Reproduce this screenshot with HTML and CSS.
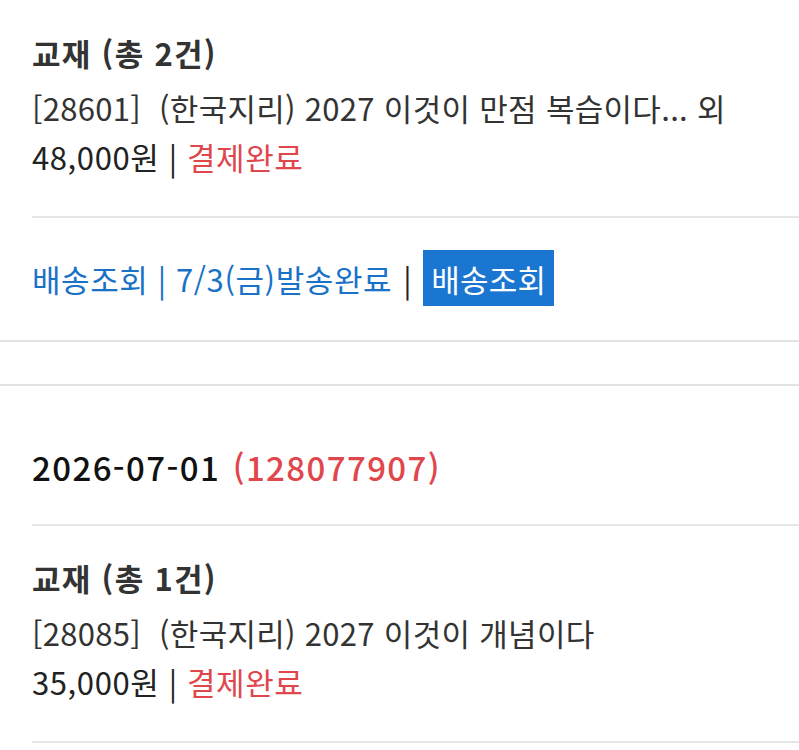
FILE: index.html
```html
<!DOCTYPE html>
<html lang="ko">
<head>
    <meta charset="UTF-8">
    <meta name="viewport" content="width=device-width, initial-scale=1.0">
    <title>주문내역</title>
    <link rel="stylesheet" href="styles.css">
</head>
<body>
    <div class="order">
        <div class="item">
            <h3 class="item-title">교재 (총 2건)</h3>
            <p class="item-name">[28601]&nbsp; (한국지리) 2027 이것이 만점 복습이다... 외</p>
            <p class="item-price">48,000원 | <span class="status">결제완료</span></p>
        </div>
        <div class="delivery">
            <span class="link">배송조회 | 7/3(금)발송완료</span>
            <span class="bar">|</span>
            <button type="button" class="btn">배송조회</button>
        </div>
    </div>

    <div class="order order-next">
        <div class="order-date">2026-07-01 <span class="order-no">(128077907)</span></div>
        <div class="item">
            <h3 class="item-title">교재 (총 1건)</h3>
            <p class="item-name">[28085]&nbsp; (한국지리) 2027 이것이 개념이다</p>
            <p class="item-price">35,000원 | <span class="status">결제완료</span></p>
        </div>
    </div>
</body>
</html>
```

FILE: styles.css
```css
body {
    margin: 0;
    background: #fff;
    font-family: "Noto Sans CJK KR", "Noto Sans", sans-serif;
    color: #222;
}
.order {
    border-bottom: 2px solid #e4e4e4;
}
.order-next {
    margin-top: 42px;
    border-top: 2px solid #e4e4e4;
    border-bottom: none;
}
.item {
    margin-left: 32px;
    padding: 28px 0 35px;
    border-bottom: 2px solid #e6e6e6;
}
.item-title {
    margin: 0 0 5px;
    font-size: 31px;
    line-height: 50px;
    font-weight: 700;
    letter-spacing: 1.3px;
    color: #333;
}
.item-name, .item-price {
    margin: 0;
    font-size: 31px;
    line-height: 49px;
    color: #333;
    letter-spacing: 0.3px;
}
.item-price {
    color: #222;
    letter-spacing: 0.6px;
}
.status {
    color: #e0474c;
}
.delivery {
    display: flex;
    align-items: center;
    gap: 11px;
    padding: 32px 32px 34px;
    font-size: 31px;
    letter-spacing: 0.6px;
}
.link {
    color: #1a72c6;
}
.bar {
    color: #222;
}
.btn {
    height: 56px;
    padding: 0 8px;
    border: none;
    background: #1a76d0;
    color: #fff;
    font-family: inherit;
    font-size: 31px;
    letter-spacing: 0.3px;
}
.order-date {
    margin-left: 32px;
    padding: 56px 0 32px;
    border-bottom: 2px solid #e6e6e6;
    font-size: 33px;
    line-height: 50px;
    font-weight: 500;
    letter-spacing: 1.4px;
    color: #111;
}
.order-no {
    color: #e0474c;
    margin-left: 2px;
}
.order-next .item {
    padding-top: 27px;
}
```
